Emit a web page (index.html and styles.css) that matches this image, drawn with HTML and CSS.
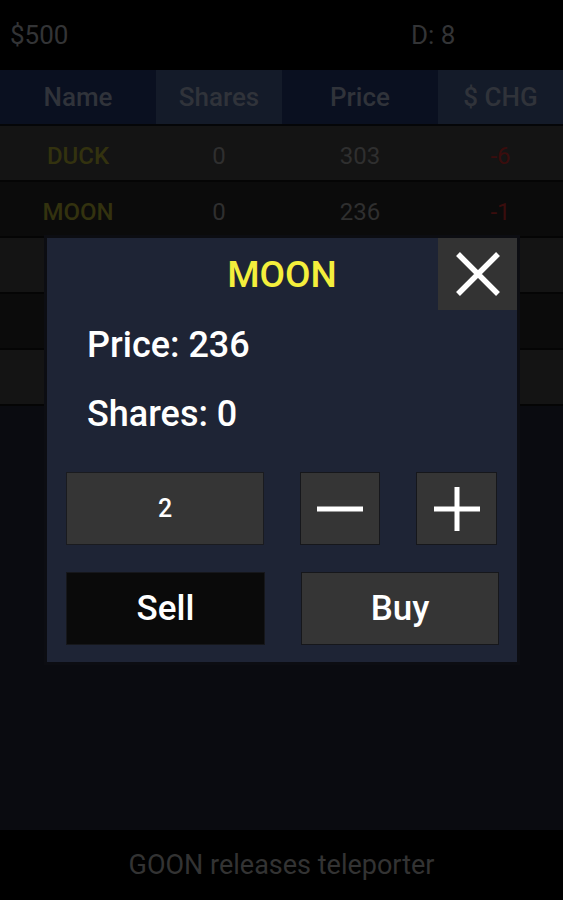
FILE: index.html
```html
<!DOCTYPE html>
<html>
<head>
<meta charset="utf-8">
<link rel="stylesheet" href="styles.css">
</head>
<body>
<div class="app">
  <div class="topbar">
    <span class="money">$500</span>
    <span class="day">D: 8</span>
  </div>
  <div class="thead">
    <div class="th th-dark">Name</div>
    <div class="th th-light">Shares</div>
    <div class="th th-dark">Price</div>
    <div class="th th-light">$ CHG</div>
  </div>
  <div class="rows">
    <div class="row row-a"><span class="name">DUCK</span><span class="num">0</span><span class="num">303</span><span class="neg">-6</span></div>
    <div class="row row-b"><span class="name">MOON</span><span class="num">0</span><span class="num">236</span><span class="neg">-1</span></div>
    <div class="row row-a"></div>
    <div class="row row-b"></div>
    <div class="row row-a"></div>
  </div>
  <div class="spacer"></div>
  <div class="footer">GOON releases teleporter</div>

  <div class="modal">
    <div class="modal-head">
      <div class="head-pad"></div>
      <div class="title">MOON</div>
      <button class="close">
        <svg width="46" height="44" viewBox="0 0 46 44"><path d="M3 2 L43 42 M43 2 L3 42" stroke="#fff" stroke-width="5.5"/></svg>
      </button>
    </div>
    <div class="info info-price">Price: 236</div>
    <div class="info info-shares">Shares: 0</div>
    <div class="controls">
      <div class="qty">2</div>
      <button class="btn icon-btn">
        <svg width="48" height="48" viewBox="0 0 48 48"><path d="M1 24 H47" stroke="#fff" stroke-width="5"/></svg>
      </button>
      <button class="btn icon-btn">
        <svg width="48" height="48" viewBox="0 0 48 48"><path d="M1 24 H47 M24 2 V46" stroke="#fff" stroke-width="5"/></svg>
      </button>
    </div>
    <div class="actions">
      <button class="btn action sell">Sell</button>
      <button class="btn action buy">Buy</button>
    </div>
  </div>
</div>
</body>
</html>
```

FILE: styles.css
```css
* { box-sizing: border-box; }
html, body { margin: 0; padding: 0; }
body {
  background: #0a0b10;
  font-family: Roboto, "Liberation Sans", sans-serif;
}
.app {
  position: relative;
  width: 563px;
  height: 900px;
  display: flex;
  flex-direction: column;
  background: #0a0b10;
}
.topbar {
  height: 70px;
  background: #000;
  display: grid;
  grid-template-columns: 401px 1fr;
  align-items: center;
  font-size: 26px;
  color: #333436;
}
.topbar span { padding-left: 10px; }

.thead {
  height: 56px;
  display: grid;
  grid-template-columns: 156px 126px 156px 125px;
  border-bottom: 2px solid #050608;
}
.th {
  display: flex;
  align-items: center;
  justify-content: center;
  font-size: 26px;
  font-weight: 500;
  color: #30333a;
}
.th-dark { background: #0a1020; }
.th-light { background: #141b29; }

.rows {
  display: flex;
  flex-direction: column;
  gap: 2px;
  background: #050505;
  padding-bottom: 2px;
}
.row {
  height: 54px;
  display: grid;
  grid-template-columns: 156px 126px 156px 125px;
  align-items: center;
  justify-items: center;
  font-size: 24px;
  padding-top: 5px;
}
.row-a { background: #141414; }
.row-b { background: #0b0b0b; }
.name { color: #33320f; font-weight: 500; }
.num { color: #2f2f2f; }
.neg { color: #3a0d0d; }

.spacer { flex: 1; }
.footer {
  height: 70px;
  background: #000;
  display: flex;
  align-items: center;
  justify-content: center;
  font-size: 27px;
  color: #333333;
}

.modal {
  position: absolute;
  left: 47px;
  top: 238px;
  width: 470px;
  height: 424px;
  background: #1e2435;
  box-shadow: 0 0 0 3px #0c0d12;
  display: flex;
  flex-direction: column;
  padding: 0 19px 17px 19px;
}
.modal-head {
  height: 72px;
  margin: 0 -19px;
  display: grid;
  grid-template-columns: 79px 1fr 79px;
  align-items: center;
}
.title {
  text-align: center;
  color: #f4ef3c;
  font-size: 37px;
  font-weight: 500;
}
.close {
  height: 72px;
  width: 79px;
  border: none;
  padding: 0;
  background: #333333;
  display: flex;
  align-items: center;
  justify-content: center;
}
.info {
  color: #fff;
  font-size: 36px;
  font-weight: 500;
  line-height: 40px;
  padding-left: 21px;
}
.info-price { margin-top: 15px; }
.info-shares { margin-top: 29px; }

.controls {
  margin-top: 38px;
  display: grid;
  grid-template-columns: 198px 80px 81px;
  column-gap: 36px;
  height: 73px;
}
.qty {
  background: #353535;
  border: 1px solid #1a1b1f;
  display: flex;
  align-items: center;
  justify-content: center;
  color: #fff;
  font-size: 25px;
  font-weight: 500;
}
.btn {
  border: 1px solid #16171b;
  padding: 0;
  margin: 0;
  display: flex;
  align-items: center;
  justify-content: center;
  font-family: Roboto, "Liberation Sans", sans-serif;
}
.icon-btn { background: #353535; }
.actions {
  margin-top: 27px;
  display: grid;
  grid-template-columns: 199px 198px;
  column-gap: 36px;
  height: 73px;
}
.action {
  color: #fff;
  font-size: 35px;
  font-weight: 500;
}
.sell { background: #0a0a0a; }
.buy { background: #353535; }
```
